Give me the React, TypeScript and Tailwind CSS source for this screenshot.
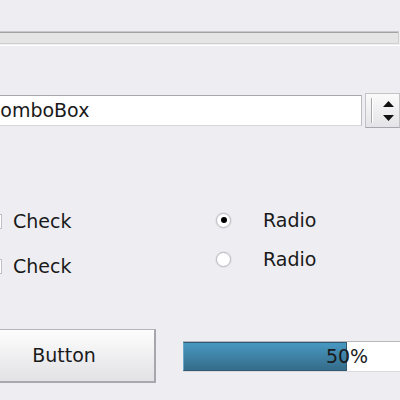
export default function App() {
  return (
    <div className="w-[400px] h-[400px] overflow-hidden bg-[#eeeef2] text-[#1a1a1a] text-[19px] font-['DejaVu_Sans',sans-serif] flex flex-col">
      {/* top scroll/frame bar */}
      <div className="mt-[31px] w-[399px] h-[13px] border-t border-b border-r border-t-[#c8c8c8] border-b-[#d0d0d0] border-r-[#cfcfcf] bg-[#e5e5e5]">
        <div className="h-px bg-[#a2a2a2]" />
      </div>
      <div className="mt-px h-px bg-white" />

      {/* combo box row */}
      <div className="mt-[47px] flex items-center h-[35px]">
        <div className="-ml-[20px] w-[383px] h-[31px] bg-white border border-[#bcbcc0] border-t-[#a8a8ae] border-b-[#d8d8dc] flex items-center pl-[6px] leading-none">
          ComboBox
        </div>
        <div className="ml-[3px] w-[35px] h-[35px] border border-[#c4c4c8] border-b-[#a6a6ac] bg-gradient-to-b from-[#fafafa] to-[#e4e4e8] flex items-center">
          <div className="ml-[5px] w-[2px] h-[25px] bg-[#a8a8ae] border-r border-white" />
          <div className="ml-[10px] flex flex-col items-center gap-[8px]">
            <svg width="11" height="6" viewBox="0 0 11 6">
              <path d="M5.5 0 L11 6 L0 6 Z" fill="#111" />
            </svg>
            <svg width="11" height="6" viewBox="0 0 11 6">
              <path d="M0 0 L11 0 L5.5 6 Z" fill="#111" />
            </svg>
          </div>
        </div>
      </div>

      {/* check + radio */}
      <div className="mt-[79px] flex items-start">
        <div className="-ml-[12px] w-[228px] flex flex-col gap-[17px]">
          {[0, 1].map((i) => (
            <div key={i} className="h-[28px] flex items-center gap-[11px]">
              <div className="w-[14px] h-[15px] bg-white border border-[#c0c0c6]" />
              <span className="leading-none">Check</span>
            </div>
          ))}
        </div>
        <div className="-mt-px flex flex-col gap-[11px]">
          {[true, false].map((on, i) => (
            <div key={i} className="h-[28px] flex items-center gap-[32px]">
              <div className="w-[15px] h-[15px] rounded-full bg-white border border-[#b8b8be] shadow-[0_0_0_1px_#e2e2e6] flex items-center justify-center">
                {on && <div className="w-[6px] h-[6px] rounded-full bg-black" />}
              </div>
              <span className="leading-none">Radio</span>
            </div>
          ))}
        </div>
      </div>

      {/* button + progress */}
      <div className="mt-[49px] flex items-start">
        <button className="-ml-[27px] w-[183px] h-[54px] shrink-0 border border-[#b4b4ba] border-r-2 border-b-2 border-r-[#a6a6ac] border-b-[#a8a8ae] bg-gradient-to-b from-[#fdfdfd] to-[#e2e2e6] leading-none">
          Button
        </button>
        <div className="ml-[27px] mt-[12px] shrink-0 relative w-[328px] h-[31px] bg-white border-t border-b border-t-[#b8b8bc] border-b-[#dadade] flex">
          <div className="w-[164px] h-full bg-gradient-to-b from-[#4898c2] to-[#356c8a] border border-[#2f5a72] border-l-[#6aa6c8]" />
          <span className="absolute inset-0 flex items-center justify-center leading-none">50%</span>
        </div>
      </div>
    </div>
  );
}
